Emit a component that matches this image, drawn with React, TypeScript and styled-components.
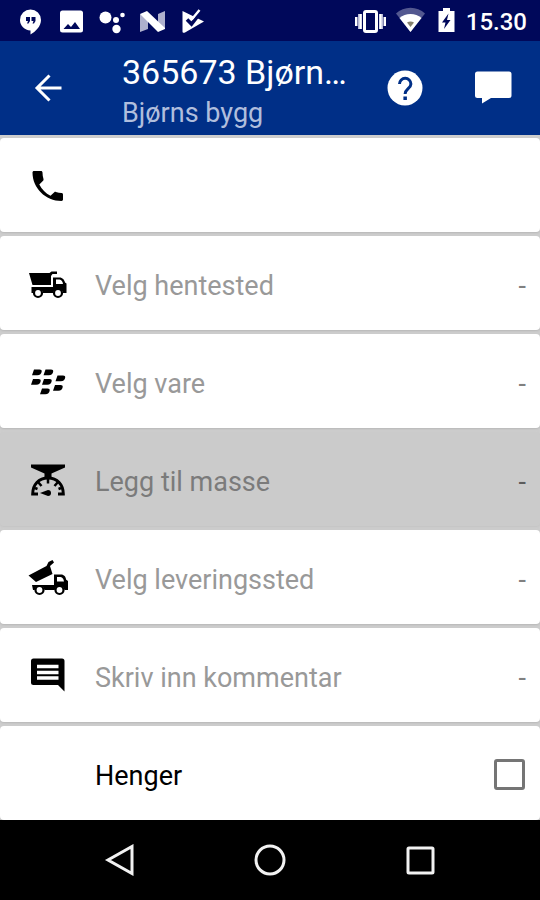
import React from "react";
import styled, { createGlobalStyle } from "styled-components";

const GlobalStyle = createGlobalStyle`
  *, *::before, *::after { box-sizing: border-box; }
  html, body, #root { height: 100%; }
  body {
    margin: 0;
    background: #000;
    font-family: Roboto, "Noto Sans", sans-serif;
  }
  button { font: inherit; color: inherit; border: 0; padding: 0; margin: 0; background: none; cursor: pointer; }
`;

const Screen = styled.div`
  display: flex;
  flex-direction: column;
  min-height: 100%;
`;

const StatusBar = styled.div`
  display: flex;
  align-items: center;
  justify-content: space-between;
  height: 41px;
  padding: 0 13px 0 18px;
  background: #00085a;
  color: #fff;
`;

const StatusGroup = styled.div`
  display: flex;
  align-items: center;
  gap: 9px;
`;

const Clock = styled.time`
  font-size: 24px;
  font-weight: 500;
  line-height: 28px;
  padding-top: 2px;
`;

const AppBar = styled.header`
  display: flex;
  align-items: center;
  height: 94px;
  padding: 0 23px 0 24px;
  background: #002f87;
  color: #fff;
`;

const IconButton = styled.button`
  display: flex;
  align-items: center;
  justify-content: center;
  width: 48px;
  height: 48px;
  flex: none;
`;

const Titles = styled.div`
  flex: 1;
  min-width: 0;
  padding: 6px 0 0 50px;
`;

const Title = styled.h1`
  margin: 0;
  font-size: 34px;
  line-height: 44px;
  font-weight: 400;
  white-space: nowrap;
`;

const Subtitle = styled.p`
  margin: 0;
  font-size: 27px;
  line-height: 38px;
  color: #b0bedd;
`;

const Actions = styled.div`
  display: flex;
  gap: 40px;
`;

const CardList = styled.main`
  flex: 1;
  display: flex;
  flex-direction: column;
  gap: 4px;
  padding-top: 3px;
  background: #cdcdcd;
`;

const Card = styled.div<{ $selected?: boolean }>`
  display: flex;
  align-items: center;
  width: 100%;
  height: 94px;
  padding: 2px 14px 0 28px;
  border-radius: 4px;
  background: ${(p) => (p.$selected ? "#cbcbcb" : "#fff")};
  box-shadow: 0 1px 2px ${(p) => (p.$selected ? "#c4c4c4" : "#b8b8b8")};
  font-size: 27px;
  line-height: 32px;
  text-align: left;
`;

const IconSlot = styled.span`
  display: flex;
  width: 40px;
  margin-right: 27px;
  flex: none;
`;

const Label = styled.span<{ $selected?: boolean }>`
  flex: 1;
  padding-top: 4px;
  color: ${(p) => (p.$selected ? "#7b7b7b" : "#999")};
`;

const Value = styled.span<{ $selected?: boolean }>`
  padding-top: 4px;
  color: ${(p) => (p.$selected ? "#5c5c5c" : "#808080")};
`;

const CheckLabel = styled.span`
  flex: 1;
  padding-top: 4px;
  color: #000;
`;

const Checkbox = styled.input`
  appearance: none;
  width: 31px;
  height: 31px;
  margin: 0 1px 0 0;
  border: 3px solid #757575;
  border-radius: 3px;
  background: #fff;
  &:checked { background: #002f87; }
`;

const NavBar = styled.nav`
  display: flex;
  align-items: center;
  justify-content: center;
  gap: 102px;
  height: 80px;
  background: #000;
  color: #f2f2f2;
`;

const StatusIcons = () => (
  <svg width="188" height="28" viewBox="18 6 188 28" fill="#fff" role="img" aria-label="Notifications">
    <path d="M30.500 8.500a10.500 10.500 0 0 0-10.500 10.500c0 6 4.500 10 10.500 10.500v4c5-3 10.500-8 10.500-14.500a10.500 10.500 0 0 0-10.500-10.500z" />
    <path fill="#00085a" d="M26 16h4v4l-1.500 2.500h-1.500l1-2.500h-2zM31.500 16h4v4l-1.500 2.500h-1.500l1-2.500h-2z" />
    <rect x="60" y="9.500" width="23" height="22" rx="2.500" />
    <path fill="#00085a" d="M63.500 28l4.500-5 3 3 4-5 5 7z" />
    <circle cx="105.500" cy="16.500" r="6" />
    <circle cx="116" cy="19" r="3" />
    <circle cx="122.500" cy="14" r="2.300" />
    <circle cx="116.500" cy="28" r="4.200" />
    <path fill="#aeb0cd" d="M140 13l8 4v11l-8 3zM165 10v18l-7-2V13z" />
    <path d="M140 13l7-3 18 17v1l-7 3z" />
    <path d="M182.500 10l21.500 10.500-19 11c-1.500.8-2.500.2-2.500-1z" />
    <path d="M187 18.500l4.500 4.500 9.500-12" fill="none" stroke="#00085a" strokeWidth="3.600" />
    <path d="M190.500 15.500l2 2 7-8.500" fill="none" stroke="#fff" strokeWidth="2.400" />
  </svg>
);

const SystemIcons = () => (
  <svg width="104" height="30" viewBox="352 6 104 30" fill="#fff" role="img" aria-label="Vibrate, Wi-Fi, battery charging">
    <path fill="#b9bbd7" d="M357 14h4v15h-4zM378 14h4v15h-4z" />
    <path d="M354 17h2.500v9H354zM358.500 14h2v15h-2zM378.500 14h2v15h-2zM382.500 17h2.500v9h-2.500z" />
    <rect x="363.500" y="11.500" width="12" height="20" rx="1.500" fill="none" stroke="#fff" strokeWidth="3" />
    <path fill="#535890" d="M395 13.500a21 21 0 0 1 29 0L409.500 32z" />
    <path d="M398.500 18a17 17 0 0 1 22 0L409.500 32z" />
    <path fill="#85816f" d="M406 22.500q3.500-2 7 0L409.500 27z" />
    <path d="M442 8h7v3h4.500v21h-16V11h4.500z" />
    <path fill="#00085a" d="M447.500 13.500l-6.500 9h3.500l-1.500 6.500 6.500-9h-3.500z" />
  </svg>
);

const BackIcon = () => (
  <svg width="28" height="28" viewBox="34 74 28 28" fill="none" stroke="#fff" strokeWidth="3">
    <path d="M61.500 88H37M49.500 75.500L37 88l12.500 12.500" />
  </svg>
);

const HelpIcon = () => (
  <svg width="36" height="36" viewBox="387 70 36 36">
    <circle cx="405" cy="88" r="17.500" fill="#fff" />
    <path d="M399.500 84a5.700 5.700 0 0 1 11.400 0c0 4.500-5.800 5-5.800 10" fill="none" stroke="#002f87" strokeWidth="3" />
    <rect x="403.400" y="96.500" width="3.500" height="3.500" fill="#002f87" />
  </svg>
);

const ChatIcon = () => (
  <svg width="40" height="36" viewBox="473 70 40 36">
    <path d="M477.500 71.500h31.500a2.500 2.500 0 0 1 2.500 2.500v21.500a2.500 2.500 0 0 1-2.500 2.500H491l-9 5.500v-5.500h-4.500a2.500 2.500 0 0 1-2.500-2.500v-21.500A2.500 2.500 0 0 1 477.500 71.500z" fill="#fff" />
  </svg>
);

const PhoneIcon = () => (
  <svg width="40" height="40" viewBox="28 166 40 40">
    <path d="M34 171h7c.8 0 1.500.7 1.500 1.500q0 3.500 1 6.500c.2.600 0 1.300-.4 1.700l-3.800 3.800c2.500 5 6.400 8.800 11.200 11.200l3.800-3.500c.4-.4 1-.5 1.600-.3q3 1 5.600 1c.9 0 1.500.6 1.500 1.500v5.200c0 .9-.6 1.400-1.500 1.400-16 0-29-13-29-28.500 0-.9.600-1.500 1.500-1.500z" />
  </svg>
);

const TruckIcon = () => (
  <svg width="40" height="40" viewBox="28 264 40 40">
    <path d="M29 273h20.500l2-1.500H57v2.500h-4.500L51 276v9H32.500z" />
    <path d="M31.500 287H53V277.500h6.500c3 0 5 2.500 5.500 5l1.500 1v9.500H63a5 5 0 0 0-9.800 0H43a5 5 0 0 0-9.800 0h-1.700z" />
    <path fill="#fff" d="M56 279.500h3.500q3 .5 3.500 4.500h-7z" />
    <circle cx="38" cy="293" r="4" fill="#fff" stroke="#000" strokeWidth="2.200" />
    <circle cx="58" cy="293" r="4" fill="#fff" stroke="#000" strokeWidth="2.200" />
  </svg>
);

const pellets = [
  [33, 369.5], [44.500, 369.5], [32, 379], [43, 379], [56.500, 375.5], [41, 388.5], [54, 385],
];

const GoodsIcon = () => (
  <svg width="40" height="40" viewBox="28 362 40 40">
    {pellets.map(([x, y]) => (
      <path key={`${x}-${y}`} d={`M${x + 1} ${y}h5.500q2.500 0 2.200 2-.4 3.700-4.400 3.700h-5.300z`} />
    ))}
  </svg>
);

const ScaleIcon = () => (
  <svg width="40" height="40" viewBox="28 460 40 40">
    <path d="M31 464.500h34v3l-13.500 6v4.500h-7v-4.500l-13.500-6z" />
    <path d="M38 494h-5.300c0-9.500 6-16 15.300-16S63.300 484.500 63.300 494H58" fill="none" stroke="#000" strokeWidth="3" />
    <path d="M48 477v6.500M38 482l3.500 4M58 482l-3.500 4M35 488l2.500 1M61 488l-2.500 1" stroke="#000" strokeWidth="2.500" />
    <path d="M40 493l8-3a3 3 0 1 1 0 6z" />
  </svg>
);

const TipperIcon = () => (
  <svg width="40" height="40" viewBox="28 558 40 40">
    <path d="M28.500 575.500l18-9.500 2-4 4-2 1.500 2.500-4 3.500 2.500 8-16.500 8z" />
    <path d="M32 585h22V574.500h7c3 0 5 2.500 5 5l2 1.500v9h-3.500a5 5 0 0 0-9.800 0H44.500a5 5 0 0 0-9.800 0H33z" />
    <path fill="#fff" d="M57 577h3.500q3 .5 3.500 4.500h-7z" />
    <circle cx="39.500" cy="590" r="4" fill="#fff" stroke="#000" strokeWidth="2.200" />
    <circle cx="59.500" cy="590" r="4" fill="#fff" stroke="#000" strokeWidth="2.200" />
  </svg>
);

const CommentIcon = () => (
  <svg width="40" height="40" viewBox="28 656 40 40">
    <path d="M33.500 658.500H62a2.500 2.500 0 0 1 2.500 2.500v30.500l-6.500-6.500H33.500a2.500 2.500 0 0 1-2.500-2.500V661a2.500 2.500 0 0 1 2.500-2.500z" />
    <path d="M37 666.500h21.500M37 672.500h21.500M37 678h21.500" stroke="#fff" strokeWidth="3.400" />
  </svg>
);

const entries = [
  { label: "Velg hentested", Icon: TruckIcon },
  { label: "Velg vare", Icon: GoodsIcon },
  { label: "Legg til masse", Icon: ScaleIcon, selected: true },
  { label: "Velg leveringssted", Icon: TipperIcon },
  { label: "Skriv inn kommentar", Icon: CommentIcon },
];

export default function App() {
  return (
    <Screen>
      <GlobalStyle />
      <StatusBar>
        <StatusIcons />
        <StatusGroup>
          <SystemIcons />
          <Clock>15.30</Clock>
        </StatusGroup>
      </StatusBar>
      <AppBar>
        <IconButton aria-label="Back"><BackIcon /></IconButton>
        <Titles>
          <Title>365673 Bjørn…</Title>
          <Subtitle>Bjørns bygg</Subtitle>
        </Titles>
        <Actions>
          <IconButton aria-label="Help"><HelpIcon /></IconButton>
          <IconButton aria-label="Messages"><ChatIcon /></IconButton>
        </Actions>
      </AppBar>
      <CardList>
        <Card as="button" aria-label="Call">
          <IconSlot><PhoneIcon /></IconSlot>
        </Card>
        {entries.map(({ label, Icon, selected }) => (
          <Card as="button" key={label} $selected={selected}>
            <IconSlot><Icon /></IconSlot>
            <Label $selected={selected}>{label}</Label>
            <Value $selected={selected}>-</Value>
          </Card>
        ))}
        <Card as="label" htmlFor="henger">
          <IconSlot />
          <CheckLabel>Henger</CheckLabel>
          <Checkbox type="checkbox" id="henger" />
        </Card>
      </CardList>
      <NavBar>
        <IconButton aria-label="Back">
          <svg width="32" height="32" viewBox="0 0 32 32" fill="none" stroke="currentColor" strokeWidth="3">
            <path d="M28 2.500v27L4 16z" />
          </svg>
        </IconButton>
        <IconButton aria-label="Home">
          <svg width="32" height="32" viewBox="0 0 32 32" fill="none" stroke="currentColor" strokeWidth="3">
            <circle cx="16" cy="16" r="14" />
          </svg>
        </IconButton>
        <IconButton aria-label="Overview">
          <svg width="32" height="32" viewBox="0 0 32 32" fill="none" stroke="currentColor" strokeWidth="3">
            <rect x="4" y="4" width="25" height="25" rx="1" />
          </svg>
        </IconButton>
      </NavBar>
    </Screen>
  );
}
